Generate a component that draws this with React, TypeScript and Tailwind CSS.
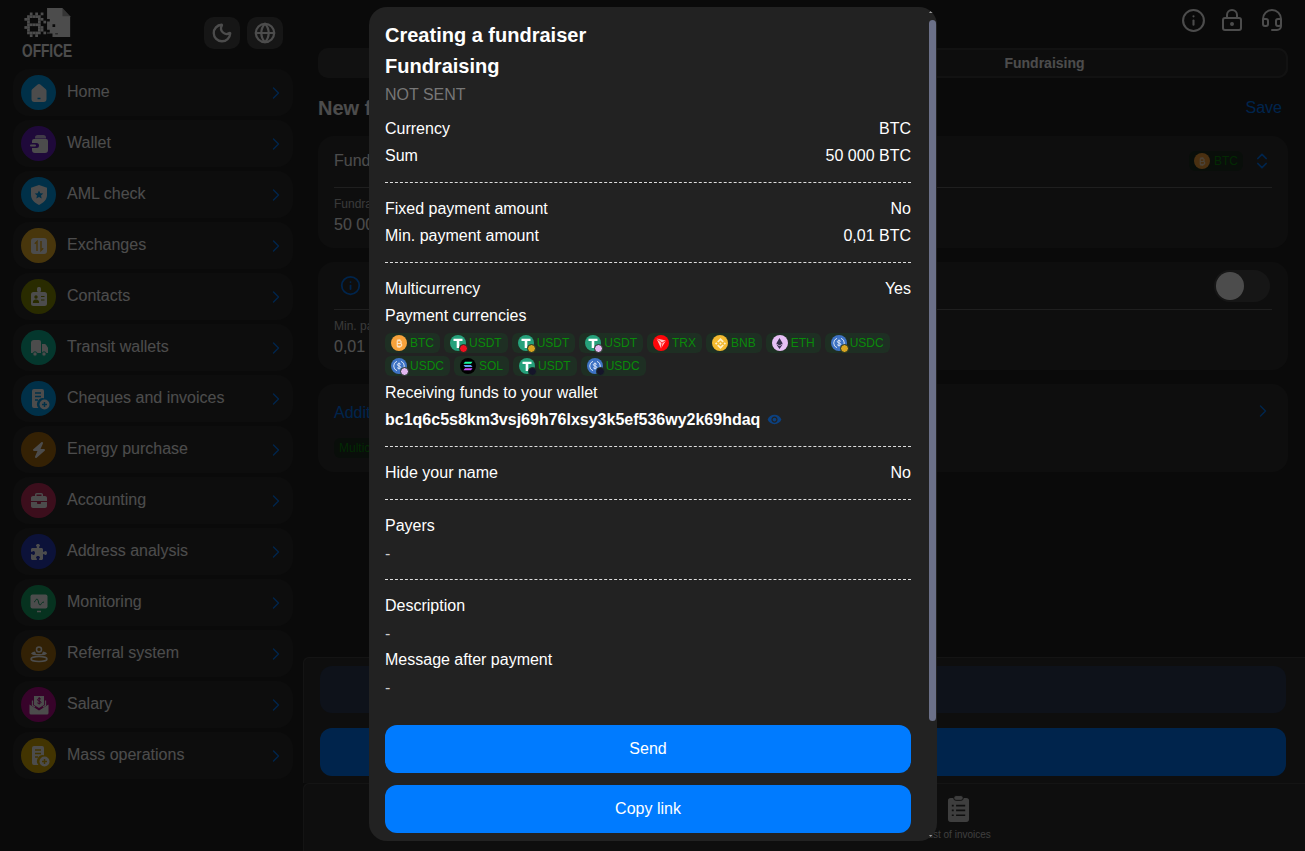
import { ChevronRight, ChevronsUpDown, Globe, Headset, Info, LockKeyhole, Moon } from 'lucide-react'
import type { ReactNode } from 'react'
import { FaBitcoinSign, FaBolt, FaBriefcase, FaEthereum, FaPuzzlePiece } from 'react-icons/fa6'
import { MdVisibility } from 'react-icons/md'
import { SiBinance } from 'react-icons/si'

const docPlus = (
  <>
    <path d="M5 4a2 2 0 0 1 2-2h8a2 2 0 0 1 2 2v7.2a6 6 0 0 0-5.6 9.8H7a2 2 0 0 1-2-2z" fill="currentColor" />
    <path d="M8 6h6M8 9.5h6M8 13h3" stroke="var(--c)" strokeWidth="1.5" />
    <circle cx="17.5" cy="17.5" r="5" fill="currentColor" />
    <path d="M17.5 15v5M15 17.5h5" stroke="var(--c)" strokeWidth="1.5" />
  </>
)

const icons: Record<string, ReactNode> = {
  home: (
    <>
      <path d="M10.7 3.6a2 2 0 0 1 2.6 0l5.5 4.6a2 2 0 0 1 .7 1.5V18a3 3 0 0 1-3 3H7.500a3 3 0 0 1-3-3V9.700a2 2 0 0 1 .7-1.500z" fill="currentColor" />
      <path d="M10.500 17.500h3" stroke="var(--c)" strokeWidth="1.500" />
    </>
  ),
  wallet: (
    <>
      <path d="M8 6.500V5.800A2.800 2.800 0 0 1 10.800 3h5.400A2.800 2.800 0 0 1 19 5.800v.700z" fill="currentColor" opacity=".75" />
      <path d="M7 7h12a2 2 0 0 1 2 2v9a3 3 0 0 1-3 3H8a3 3 0 0 1-3-3v-2h4.500a2.500 2.500 0 0 0 0-5H5V9a2 2 0 0 1 2-2z" fill="currentColor" />
      <rect x="3" y="12.500" width="6" height="2" rx="1" fill="currentColor" />
    </>
  ),
  shield: (
    <>
      <path d="M12 2l8 2.800v7c0 4.700-3.200 8-8 10.200-4.800-2.200-8-5.500-8-10.200v-7z" fill="currentColor" />
      <path d="M12 7.500l1.300 2.800 3 .3-2.300 2 .7 3L12 14l-2.700 1.600.7-3-2.300-2 3-.3z" fill="var(--c)" />
    </>
  ),
  exchange: (
    <>
      <rect x="4" y="4" width="16" height="16" rx="3" fill="currentColor" />
      <path d="M10 17V7.500L7.800 9.800M14 7v9.500l2.200-2.300" stroke="var(--c)" strokeWidth="1.500" fill="none" />
    </>
  ),
  contact: (
    <>
      <rect x="10" y="2" width="4" height="5" rx="1.500" fill="currentColor" />
      <rect x="4" y="7" width="16" height="14" rx="2.500" fill="currentColor" />
      <circle cx="9" cy="12" r="1.700" fill="var(--c)" />
      <path d="M6.500 17.500a2.500 2.500 0 0 1 5 0zM14 11.500h3.500M14 15h3.500" fill="var(--c)" stroke="var(--c)" strokeWidth="1.200" />
    </>
  ),
  truck: (
    <>
      <path d="M4 7a3 3 0 0 1 3-3h5a2 2 0 0 1 2 2v11H4z" fill="currentColor" />
      <path d="M15 8h2.500a2 2 0 0 1 1.700.9l1.300 2.100a2 2 0 0 1 .5 1.300V17h-6z" fill="currentColor" />
      <circle cx="8" cy="18" r="2.200" fill="currentColor" stroke="var(--c)" />
      <circle cx="17" cy="18" r="2.200" fill="currentColor" stroke="var(--c)" />
    </>
  ),
  doc: docPlus,
  monitor: (
    <>
      <rect x="3.500" y="3.500" width="17" height="14" rx="2" fill="currentColor" />
      <path d="M10 20.500h4" stroke="currentColor" strokeWidth="1.500" />
      <path d="M7 11c1.500 0 1.500-3 3-3s1.500 6 3 6 1-3 4-3" stroke="var(--c)" strokeWidth="1" fill="none" />
    </>
  ),
  referral: (
    <>
      <circle cx="12" cy="7.500" r="2.500" fill="none" stroke="currentColor" strokeWidth="1.500" />
      <path d="M4 11.500c1.500-1.500 2.800-1.800 4-2l1 2.500h6l1-2.500c1.300.2 2.500.6 4 2-.5 1.300-3.500 2-8 2s-7.500-.7-8-2z" fill="currentColor" />
      <ellipse cx="12" cy="17" rx="8" ry="2.500" fill="none" stroke="currentColor" strokeWidth="1.500" />
    </>
  ),
  salary: (
    <>
      <path d="M7 3h10v9l-5 3-5-3z" fill="currentColor" />
      <path d="M5.500 7.500v5L8 14M18.500 7.500v5L16 14" fill="none" stroke="currentColor" strokeWidth="1.300" />
      <path d="M2.500 11.500l9.500 6 9.500-6V20a1.500 1.500 0 0 1-1.500 1.500H4A1.500 1.500 0 0 1 2.500 20z" fill="currentColor" />
      <path d="M14 6.200c-.5-.8-3.500-1-3.500.6 0 1.700 3.500.8 3.500 2.500 0 1.500-3 1.400-3.700.5M12.200 4v7.500" stroke="var(--c)" strokeWidth="1" fill="none" />
    </>
  ),
}

type MenuItem = { label: string; color: string; icon: ReactNode }

const g = (name: string) => (
  <svg viewBox="0 0 24 24" className="size-[24px]">
    {icons[name]}
  </svg>
)

const menu: MenuItem[] = [
  { label: 'Home', color: '#00a0f0', icon: g('home') },
  { label: 'Wallet', color: '#6a1fc4', icon: g('wallet') },
  { label: 'AML check', color: '#00a0f0', icon: g('shield') },
  { label: 'Exchanges', color: '#f0b428', icon: g('exchange') },
  { label: 'Contacts', color: '#8a9000', icon: g('contact') },
  { label: 'Transit wallets', color: '#10b898', icon: g('truck') },
  { label: 'Cheques and invoices', color: '#00a0f0', icon: g('doc') },
  { label: 'Energy purchase', color: '#b06e10', icon: <FaBolt className="size-[16px]" /> },
  { label: 'Accounting', color: '#c83060', icon: <FaBriefcase className="size-[16px]" /> },
  { label: 'Address analysis', color: '#2a3cc0', icon: <FaPuzzlePiece className="size-[16px]" /> },
  { label: 'Monitoring', color: '#16a86a', icon: g('monitor') },
  { label: 'Referral system', color: '#a87012', icon: g('referral') },
  { label: 'Salary', color: '#b80a8c', icon: g('salary') },
  { label: 'Mass operations', color: '#dcb006', icon: g('doc') },
]

// logo bitmap, one char = one 3px cell
const logoPixels = [
  '..#.#.#.',
  '.#####..',
  '##...##.',
  '.#...#.#',
  '.#####..',
  '##...##.',
  '.#...##.',
  '.#####.#',
  '..#.#...',
]

const Logo = () => (
  <div className="flex h-[52px] w-[52px] flex-col items-start">
    <svg width="51" height="32" viewBox="0 0 51 32" className="block text-white">
      {logoPixels.map((row, y) =>
        row.split('').map((c, x) => (c === '#' ? <rect key={`${x}-${y}`} x={x * 3} y={5 + y * 3} width="3" height="3" fill="currentColor" /> : null)),
      )}
      <path d="M25 0h17l8.500 9v23H25z" fill="currentColor" />
      <path d="M42 0l8.500 9H42z" fill="#222222" opacity=".35" />
      <path d="M25 12h3v3h-3zM31 18h3v3h-3zM25 24h3v3h-3zM28 28h3v4h-3zM25 28h3v4h-3zM34 28h3v1h-3z" fill="#222222" />
    </svg>
    <span className="mt-[5px] origin-left scale-x-[0.76] text-[18px] leading-[18px] font-bold text-white">OFFICE</span>
  </div>
)

const Sidebar = () => (
  <aside className="flex w-[303px] shrink-0 flex-col">
    <div className="flex h-[69px] items-start justify-between pt-[8px] pr-[20px] pl-[22px]">
      <Logo />
      <div className="mt-[9px] flex gap-[7px]">
        <button className="flex h-[32px] w-[36px] items-center justify-center rounded-[10px] bg-[#4a4a4a] text-white">
          <Moon size={22} strokeWidth={2.5} />
        </button>
        <button className="flex h-[32px] w-[36px] items-center justify-center rounded-[10px] bg-[#4a4a4a] text-white">
          <Globe size={22} strokeWidth={2.4} />
        </button>
      </div>
    </div>
    <nav className="flex flex-col gap-[4px] pr-[10px] pl-[13px]">
      {menu.map((item) => (
        <div key={item.label} className="flex h-[47px] items-center rounded-[16px] bg-[#2c2c2c] pl-[8px]">
          <span
            className="flex size-[35px] items-center justify-center rounded-full text-white"
            style={{ backgroundColor: item.color, ['--c' as string]: item.color }}
          >
            {item.icon}
          </span>
          <span className="ml-[11px] flex-1 pb-[2px] text-[16px] text-white">{item.label}</span>
          <ChevronRight size={20} strokeWidth={1.6} className="mr-[7px] text-[#007bff]" />
        </div>
      ))}
    </nav>
  </aside>
)

const Card = ({ children, className }: { children: ReactNode; className: string }) => (
  <div className={`rounded-[16px] bg-[#303030] px-[16px] ${className}`}>{children}</div>
)

const MainPage = () => (
  <main className="flex h-full flex-1 flex-col">
    <div className="flex flex-1 flex-col pr-[17px] pl-[15px]">
      <div className="mb-[8px] flex h-[40px] items-center justify-end gap-[16px] pr-[4px] text-white">
        <Info size={25} strokeWidth={2} className="-mr-[2px]" />
        <LockKeyhole size={24} strokeWidth={2} />
        <Headset size={24} strokeWidth={2} />
      </div>
      <div className="flex h-[30px] rounded-[10px] bg-[#3a3a3a] text-[14px] font-bold text-white">
        <div className="flex-1 text-center leading-[30px]">Collecting</div>
        <div className="flex-1 rounded-[10px] border-2 border-[#3f3f3f] bg-[#2c2c2c] text-center leading-[26px]">Fundraising</div>
      </div>
      <div className="mt-[15px] flex h-[30px] items-center justify-between pr-[6px]">
        <span className="text-[20px] font-bold text-white">New fundraiser</span>
        <span className="text-[16px] text-[#007bff]">Save</span>
      </div>
      <Card className="mt-[13px] h-[112px]">
        <div className="flex h-[52px] items-center justify-between border-b border-[#6a6a6a] pb-[1px]">
          <span className="text-[16px] text-white">Fundraising amount</span>
          <span className="flex items-center gap-[6px]">
            <span className="flex h-[20px] items-center gap-[4px] rounded-[6px] bg-[#1e2f23] pr-[5px] pl-[5px] text-[12px] text-[#0a8a0a]">
              <Coin kind="btc" />
              BTC
            </span>
            <ChevronsUpDown size={20} className="ml-[3px] text-[#007bff]" />
          </span>
        </div>
        <div className="pt-[9px] text-[12px] leading-[14px] text-[#c0c0c0]">Fundraising amount</div>
        <div className="text-[16px] leading-[27px] text-white">50 000</div>
      </Card>
      <Card className="mt-[14px] h-[108px]">
        <div className="flex h-[48px] items-center justify-between border-b border-[#6a6a6a]">
          <Info size={21} strokeWidth={2} className="ml-[6px] text-[#007bff]" />
          <span className="relative mr-[2px] h-[32px] w-[56px] rounded-full bg-[#4a4a4a]">
            <span className="absolute top-[2px] left-[2px] size-[28px] rounded-full bg-white" />
          </span>
        </div>
        <div className="pt-[9px] text-[12px] leading-[14px] text-[#c0c0c0]">Min. payment amount</div>
        <div className="text-[16px] leading-[27px] text-white">0,01</div>
      </Card>
      <Card className="mt-[14px] h-[88px]">
        <div className="flex h-[52px] items-center justify-between pt-[6px]">
          <span className="text-[16px] text-[#007bff]">Additional settings</span>
          <ChevronRight size={20} strokeWidth={1.6} className="-mt-[4px] -mr-[1px] text-[#007bff]" />
        </div>
        <span className="mt-[2px] flex h-[20px] w-fit items-center rounded-[6px] bg-[#1e2f23] px-[5px] text-[12px] text-[#0a8a0a]">Multicurrency</span>
      </Card>
    </div>
    <div className="flex h-[126px] flex-col gap-[15px] rounded-tl-[6px] border-t border-l border-[#444] bg-[#2f2f2f] pt-[8px] pr-[19px] pl-[16px]">
      <div className="h-[47px] shrink-0 rounded-[12px] bg-[#2f3c57]" />
      <div className="h-[48px] shrink-0 rounded-[12px] bg-[#007bff]" />
    </div>
    <div className="flex h-[68px] justify-start rounded-tl-[6px] border-t border-l border-[#444] bg-[#2f2f2f] pl-[609px]">
      <div className="flex w-[90px] flex-col items-center pt-[11px]">
        <svg viewBox="0 0 24 28" className="h-[27px] w-[23px] text-[#d0d0d0]">
          <rect x="1" y="3" width="22" height="25" rx="3" fill="currentColor" />
          <rect x="7" y="0.500" width="10" height="5" rx="2.500" fill="currentColor" stroke="#2f2f2f" />
          <path d="M9.500 11H19M9.500 16H19M9.500 21H19M5 11h2M5 16h2M5 21h2" stroke="#2f2f2f" strokeWidth="1.700" />
        </svg>
        <span className="mt-[7px] text-[10px] leading-[12px] whitespace-nowrap text-[#d0d0d0]">List of invoices</span>
      </div>
    </div>
  </main>
)

type CoinKind = 'btc' | 'usdt' | 'trx' | 'bnb' | 'eth' | 'usdc' | 'sol'
type BadgeKind = 'trx' | 'bnb' | 'eth' | 'sol'

const badgeColors: Record<BadgeKind, string> = { trx: '#f01020', bnb: '#d9a520', eth: '#e3b8f0', sol: '#15152a' }

const Coin = ({ kind, badge }: { kind: CoinKind; badge?: BadgeKind }) => (
  <span className="relative flex size-[16px] shrink-0 items-center justify-center">
    {kind === 'btc' && (
      <span className="flex size-[16px] items-center justify-center rounded-full bg-[#f7a23b] text-[#fbe3c4]">
        <FaBitcoinSign size={9} />
      </span>
    )}
    {kind === 'usdt' && (
      <span className="flex size-[16px] items-center justify-center rounded-full bg-[#26a17b]">
        <svg viewBox="0 0 16 16" className="size-[16px]">
          <path d="M3.500 3.800h9v2.200H9.300v7H6.700V6H3.500z" fill="#fff" />
        </svg>
      </span>
    )}
    {kind === 'trx' && (
      <span className="flex size-[16px] items-center justify-center rounded-full bg-[#ff060a]">
        <svg viewBox="0 0 16 16" className="size-[16px]">
          <path d="M3.500 3.500l9.500 2-5 8z" fill="#ffc4c4" />
          <path d="M3.500 3.500L9 8l4-2.500M9 8l-1 5.500" stroke="#ff060a" strokeWidth=".8" fill="none" />
        </svg>
      </span>
    )}
    {kind === 'bnb' && (
      <span className="flex size-[16px] items-center justify-center rounded-full bg-[#f3ba2f] text-[#fdf0c8]">
        <SiBinance size={11} />
      </span>
    )}
    {kind === 'eth' && (
      <span className="flex size-[16px] items-center justify-center rounded-full bg-[#e6bff5] text-[#35304a]">
        <FaEthereum size={11} />
      </span>
    )}
    {kind === 'usdc' && (
      <span className="flex size-[16px] items-center justify-center rounded-full bg-[#3e73c4]">
        <svg viewBox="0 0 16 16" className="size-[16px]" fill="none" stroke="#e6eefa">
          <path d="M6 3.300a5 5 0 0 0 0 9.400M10 3.300a5 5 0 0 1 0 9.400" strokeWidth=".9" />
          <path d="M9.800 6.500C9.400 5.300 6.300 5.200 6.300 6.700c0 1.800 3.500.8 3.500 2.600 0 1.500-3.200 1.400-3.700.2M8 4.500v7" strokeWidth=".9" />
        </svg>
      </span>
    )}
    {kind === 'sol' && (
      <span className="flex size-[16px] items-center justify-center rounded-full bg-black">
        <svg viewBox="0 0 16 16" className="size-[16px]">
          <path d="M5 3.800h7.500L11 5.800H3.500z" fill="#19fb9b" />
          <path d="M3.500 7h7.500l1.500 2H5z" fill="#5f9ef0" />
          <path d="M5 10.200h7.500L11 12.200H3.500z" fill="#c44ff0" />
        </svg>
      </span>
    )}
    {badge && (
      <span
        className="absolute -right-[2px] -bottom-[2px] size-[9px] rounded-full border border-[#1e2f23]"
        style={{ backgroundColor: badgeColors[badge] }}
      />
    )}
  </span>
)

type Payment = { label: string; kind: CoinKind; badge?: BadgeKind }

const payments: Payment[] = [
  { label: 'BTC', kind: 'btc' },
  { label: 'USDT', kind: 'usdt', badge: 'trx' },
  { label: 'USDT', kind: 'usdt', badge: 'bnb' },
  { label: 'USDT', kind: 'usdt', badge: 'eth' },
  { label: 'TRX', kind: 'trx' },
  { label: 'BNB', kind: 'bnb' },
  { label: 'ETH', kind: 'eth' },
  { label: 'USDC', kind: 'usdc', badge: 'bnb' },
  { label: 'USDC', kind: 'usdc', badge: 'eth' },
  { label: 'SOL', kind: 'sol' },
  { label: 'USDT', kind: 'usdt', badge: 'sol' },
  { label: 'USDC', kind: 'usdc', badge: 'sol' },
]

const Row = ({ label, value, className }: { label: string; value?: string; className?: string }) => (
  <div className={`flex h-[27px] items-center justify-between text-[16px] text-white ${className ?? ''}`}>
    <span>{label}</span>
    {value ? <span>{value}</span> : null}
  </div>
)

const Empty = () => <div className="mt-[1px] h-[27px] text-[16px] leading-[27px] text-[#ccc]">-</div>

const Dashed = ({ className = 'mt-[13px]' }: { className?: string }) => <div className={`mb-[12px] h-0 border-t border-dashed border-[#ddd] ${className}`} />

const Modal = () => (
  <div className="fixed top-[7px] left-[369px] h-[834px] w-[568px] overflow-hidden rounded-[18px] bg-[#222222] pt-[13px] pr-[26px] pl-[16px] font-['Liberation_Sans',sans-serif]">
    <h2 className="text-[20px] leading-[31px] font-bold text-white">Creating a fundraiser</h2>
    <h3 className="text-[20px] leading-[31px] font-bold text-white">Fundraising</h3>
    <div className="-mt-[1px] text-[16px] leading-[27px] text-[#777]">NOT SENT</div>
    <Row className="mt-[7px]" label="Currency" value="BTC" />
    <Row label="Sum" value="50 000 BTC" />
    <Dashed />
    <Row label="Fixed payment amount" value="No" />
    <Row label="Min. payment amount" value="0,01 BTC" />
    <Dashed />
    <Row label="Multicurrency" value="Yes" />
    <Row label="Payment currencies" />
    <div className="mt-[4px] flex flex-wrap gap-x-[4px] gap-y-[3px]">
      {payments.map((p, i) => (
        <span key={i} className="flex h-[20px] items-center gap-[3px] rounded-[6px] bg-[#1e2f23] pr-[6px] pl-[6px] text-[12px] text-[#0a8a0a]">
          <Coin kind={p.kind} badge={p.badge} />
          {p.label}
        </span>
      ))}
    </div>
    <Row className="mt-[3px]" label="Receiving funds to your wallet" />
    <div className="flex h-[27px] items-center gap-[7px] text-[16px] font-bold text-white">
      bc1q6c5s8km3vsj69h76lxsy3k5ef536wy2k69hdaq
      <MdVisibility size={15} className="text-[#0c4180]" />
    </div>
    <Dashed />
    <Row label="Hide your name" value="No" />
    <Dashed />
    <Row label="Payers" />
    <Empty />
    <Dashed className="mt-[12px]" />
    <Row label="Description" />
    <Empty />
    <Row className="-mt-[1px]" label="Message after payment" />
    <Empty />
    <button className="mt-[24px] h-[48px] w-full rounded-[12px] bg-[#007bff] text-[16px] text-white">Send</button>
    <button className="mt-[12px] h-[48px] w-full rounded-[12px] bg-[#007bff] text-[16px] text-white">Copy link</button>
    {/* scrollbar */}
    <div className="absolute top-[13px] right-[1px] h-[701px] w-[7px] rounded-full bg-[#6b7088]" />
    <div className="absolute top-[2px] right-[2px] h-0 w-0 border-x-[3px] border-b-[4px] border-x-transparent border-b-[#9a9a9a]" />
    <div className="absolute right-[2px] bottom-[2px] h-0 w-0 border-x-[3px] border-t-[4px] border-x-transparent border-t-[#9a9a9a]" />
  </div>
)

export default function App() {
  return (
    <div className="relative flex h-screen w-full overflow-hidden bg-[#222222] font-['Liberation_Sans',sans-serif]">
      <Sidebar />
      <MainPage />
      <div className="fixed inset-0 bg-black/70" />
      <Modal />
    </div>
  )
}
